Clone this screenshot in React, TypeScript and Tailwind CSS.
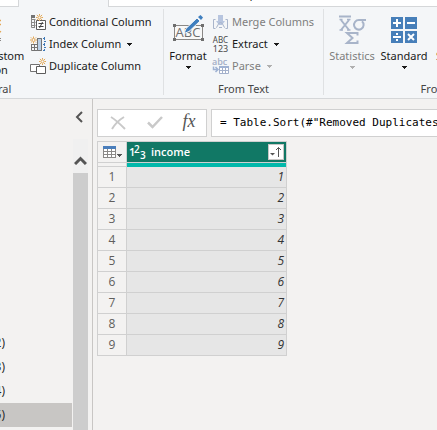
import React from "react";

const SUN = "#e3a857";

function Sun({ x, y }: { x: number; y: number }) {
  return (
    <g transform={`translate(${x} ${y})`} stroke={SUN} strokeWidth="1" fill="none">
      <circle r="1.5" />
      <path d="M0-3.5V-2M0 3.5V2M-3.5 0H-2M3.5 0H2M-2.6-2.6l1.1 1.1M2.6-2.6l-1.1 1.1M-2.6 2.6l1.1-1.1M2.6 2.6l-1.1-1.1" />
    </g>
  );
}

function ConditionalIcon() {
  return (
    <svg width="16" height="16" viewBox="0 0 16 16" className="shrink-0">
      <path d="M1.5 2v11.5H5M1.5 5.5h4M1.5 8.5h4M1.5 11.5h4M4.5 5v9" stroke="#8a8886" fill="none" />
      <path d="M1 1h4v3H1z" fill="#737373" />
      <path d="M6.5 6.5h9v9h-9z" stroke="#5c5c5c" fill="#fff" />
      <path d="M8.5 9.5h5M8.5 12.5h5M12.5 8l-3 6" stroke="#444" fill="none" />
      <Sun x={9.5} y={3.5} />
    </svg>
  );
}

function IndexIcon() {
  return (
    <svg width="16" height="16" viewBox="0 0 16 16" className="shrink-0">
      <path d="M1.5 8v6.5h10v-12H7M4.5 8v6M1.5 8.5h6M1.5 11.5h6" stroke="#737373" fill="none" />
      <path d="M7.5 2.5h4v12h-4z" fill="#b9d0e8" stroke="#737373" />
      <path d="M13 2.5h2M14 5.5h2M13 8.5h2M14 11.5h2M13 14.5h2" stroke="#3f7ab8" />
      <path d="M14.5 1v14" stroke="#3f7ab8" strokeDasharray="1 1" />
      <Sun x={3.5} y={4} />
    </svg>
  );
}

function DuplicateIcon() {
  return (
    <svg width="16" height="16" viewBox="0 0 16 16" className="shrink-0 overflow-visible">
      <path d="M.5 6.5h9v7h-9z" stroke="#737373" fill="#fff" />
      <path d="M6.5 8.5h9v7h-9z" stroke="#5c5c5c" fill="#fff" />
      <Sun x={12.5} y={3.5} />
    </svg>
  );
}

function MergeIcon() {
  return (
    <svg width="17" height="16" viewBox="0 0 17 16" className="shrink-0">
      <path d="M3.5 5.5h-2v9h2M13.5 5.5h2v9h-2" stroke="#a9b5cb" fill="none" />
      <path d="M6 1h5v6h2l-3 4h-3L4 7h2z" fill="#b7c5df" />
      <path d="M4 13.5c2 0 1.5-5 4.5-5s2.5 5 4.5 5M7 13.5h3" stroke="#a9b5cb" fill="none" />
    </svg>
  );
}

function ExtractIcon() {
  return (
    <span className="flex w-[17px] flex-col items-center text-[8px] leading-[9px] text-[#4a4a4a]">
      <span>ABC</span>
      <span className="text-[9px]">123</span>
    </span>
  );
}

function ParseIcon() {
  return (
    <svg width="17" height="17" viewBox="0 0 17 17" className="shrink-0">
      <text x="0" y="7" fontSize="9" fontWeight="600" fill="#a3aec6" fontFamily="'Open Sans', sans-serif">abc</text>
      <path d="M1.5 8.5v3H5M3.5 9l2.500 2.500L3.500 14" stroke="#9fb2d3" fill="none" strokeWidth="1.5" />
      <path d="M7.5 9.5h9v6h-9zM7.5 12.5h9M10.5 10v6M13.5 10v6" stroke="#a3b0cb" fill="#fff" />
      <path d="M7 8h10v2H7z" fill="#9fb2d3" />
    </svg>
  );
}

function FormatIcon() {
  return (
    <svg width="32" height="32" viewBox="0 0 32 32">
      <path d="M2.5 12.5h28v14h-28z" stroke="#8a8886" fill="#f8f8f8" />
      <text x="16" y="24" fontSize="13" textAnchor="middle" fill="#6e6e6e" fontFamily="'Open Sans', sans-serif">ABC</text>
      <path d="M1 11h3v3H1zM29 11h3v3h-3zM1 25h3v3H1zM29 25h3v3h-3z" fill="#6e6e6e" />
      <path d="M14 15.5L25 5l3 3L17 18.5l-5 2z" fill="#3f7fbf" stroke="#f4f6f8" />
      <path d="M26 4l2.5-2L31 4.5 29 7z" fill="#3f7fbf" />
    </svg>
  );
}

function StatisticsIcon() {
  return (
    <svg width="32" height="32" viewBox="0 0 32 32" stroke="#a8b4c9" fill="none" strokeWidth="2">
      <path d="M3 3.5h12" />
      <path d="M5 7l8 10M13 7L5 17" />
      <path d="M3.5 6.5h3M11 6.5h3.5M3.5 17h3.5M11 17h3.5" strokeWidth="1.5" />
      <path d="M30 7h-7a4.8 4.8 0 1 0 3 1.2" />
      <path d="M21.5 22.5V20H11l5.5 5-5.5 5h10.5v-2.5" />
    </svg>
  );
}

function StandardIcon() {
  return (
    <svg width="32" height="32" viewBox="0 0 32 32">
      <path d="M3 4h12v12H3zM17 4h12v12H17zM3 18h12v12H3zM17 18h12v12H17z" fill="#477fb9" />
      <path d="M5 10h8M9 6v8M19 10h8M5 24h8M20 21l6 6M26 21l-6 6" stroke="#fff" strokeWidth="2" />
      <path d="M8 20h2v2H8zM8 26h2v2H8z" fill="#fff" />
    </svg>
  );
}

function InvokeIcon() {
  return (
    <svg width="32" height="32" viewBox="0 0 32 32">
      <path d="M2.5 6.5h22v20h-22zM2 27.5h29M27 25.5h4" stroke="#8a8886" fill="none" />
      <path d="M28 7.5h3M28 11.5h3M27 17l4 2" stroke={SUN} strokeWidth="1.5" />
    </svg>
  );
}

function Caret({ className = "" }: { className?: string }) {
  return (
    <svg width="5" height="3" viewBox="0 0 5 3" className={className} fill="currentColor" shapeRendering="crispEdges">
      <path d="M0 0h5L2.5 3z" />
    </svg>
  );
}

function SmallButton({ icon, label, caret, muted }: { icon: React.ReactNode; label: string; caret?: boolean; muted?: boolean }) {
  return (
    <button
      disabled={muted}
      className={`flex h-[22px] items-center gap-[3px] whitespace-nowrap ${muted ? "text-[#7e7e7e]" : "text-[#1a1a1a]"}`}
    >
      {icon}
      <span>{label}</span>
      {caret && <Caret className={muted ? "ml-[3px] text-[#b0b0b0]" : "ml-[3px]"} />}
    </button>
  );
}

function LargeButton({ icon, lines, caret, muted, className }: { icon: React.ReactNode; lines: string[]; caret?: boolean; muted?: boolean; className: string }) {
  return (
    <button disabled={muted} className={`flex shrink-0 flex-col items-center leading-[14px] ${muted ? "text-[#7e7e7e]" : "text-[#1a1a1a]"} ${className}`}>
      {icon}
      <span className="mt-1 flex flex-col whitespace-nowrap">
        {lines.map((l) => (
          <span key={l}>{l}</span>
        ))}
      </span>
      {caret && <Caret className={muted ? "mt-[3px] text-[#b0b0b0]" : "mt-[3px]"} />}
    </button>
  );
}

function Group({ label, className, children }: { label: string; className: string; children: React.ReactNode }) {
  return (
    <section className={`flex shrink-0 flex-col justify-between ${className}`}>
      <div className="flex">{children}</div>
      <div className="text-center leading-4 text-[#444]">{label}</div>
    </section>
  );
}

const Divider = () => <div className="my-[2px] w-px shrink-0 bg-[#dfe1e3]" />;

const rows = [1, 2, 3, 4, 5, 6, 7, 8, 9];
const queries = ["(2)", "(3)", "(4)", "(5)"];

export default function App() {
  return (
    <div className="flex h-screen flex-col overflow-hidden bg-[#f3f2f1] font-['Open_Sans','Noto_Sans',sans-serif] text-[12px] text-[#222]">
      <nav className="flex h-[7px] shrink-0 overflow-hidden bg-white">
        <div className="w-[18px] border-b border-[#d5d7d9]" />
        <div className="w-[91px] border-x border-[#d5d7d9] bg-[#f4f6f8]" />
        <div className="flex flex-1 items-end border-b border-[#d5d7d9] pb-1 pl-[122px]">
          <button className="leading-4">Help</button>
        </div>
      </nav>

      <div className="flex h-[92px] shrink-0 overflow-hidden border-b border-[#d5d7d9] bg-[#f4f6f8] pb-px font-['Noto_Sans','Open_Sans',sans-serif] text-[11px]">
        <Group label="General" className="-ml-[181px] w-[344px]">
          <div className="flex flex-1 justify-end gap-[5px] pr-[10px]">
            <LargeButton icon={<InvokeIcon />} lines={["Invoke Custom", "Function"]} className="w-[79px] pt-[6px]" />
            <div className="w-[123px] pt-1">
              <SmallButton icon={<ConditionalIcon />} label="Conditional Column" />
              <SmallButton icon={<IndexIcon />} label="Index Column" caret />
              <SmallButton icon={<DuplicateIcon />} label="Duplicate Column" />
            </div>
          </div>
        </Group>
        <Divider />
        <Group label="From Text" className="w-[159px]">
          <LargeButton icon={<FormatIcon />} lines={["Format"]} caret className="w-[48px] pt-[6px]" />
          <div className="pt-1">
            <SmallButton icon={<MergeIcon />} label="Merge Columns" muted />
            <SmallButton icon={<ExtractIcon />} label="Extract" caret />
            <SmallButton icon={<ParseIcon />} label="Parse" caret muted />
          </div>
        </Group>
        <Divider />
        <Group label="From Number" className="w-[264px] pl-[2px]">
          <LargeButton icon={<StatisticsIcon />} lines={["Statistics"]} caret muted className="w-[52px] pt-[6px]" />
          <LargeButton icon={<StandardIcon />} lines={["Standard"]} caret className="w-[52px] pt-[6px]" />
          <LargeButton icon={<StandardIcon />} lines={["Scientific"]} caret className="w-[58px] pt-[6px]" />
        </Group>
      </div>

      <div className="flex min-h-0 flex-1">
        <aside className="flex w-[93px] shrink-0 flex-col border-r border-[#c8c6c4]">
          <div className="flex h-10 shrink-0 items-center justify-end pr-2">
            <button aria-label="Collapse queries" className="pb-1">
              <svg width="9" height="12" viewBox="0 0 9 12" fill="none" stroke="#555" strokeWidth="2">
                <path d="M7 1L2 6l5 5" />
              </svg>
            </button>
          </div>
          <div className="flex min-h-0 flex-1 gap-px">
            <ul className="flex flex-1 flex-col justify-end pb-[3px]">
              {queries.map((q) => (
                <li key={q} className={q === "(5)" ? "bg-[#c8c6c4]" : ""}>
                  <button className="flex h-6 w-[5px] items-center justify-end">{q}</button>
                </li>
              ))}
            </ul>
            <div className="flex w-[19px] flex-col pr-1">
              <button aria-label="Scroll up" className="flex h-[34px] shrink-0 items-center justify-center bg-[#f0f0f0] pt-2">
                <svg width="13" height="9" viewBox="0 0 13 9" fill="none" stroke="#555" strokeWidth="3">
                  <path d="M1 8l5.5-5.5L12 8" />
                </svg>
              </button>
              <div className="flex-1 bg-[#cdcdcd]" />
            </div>
          </div>
        </aside>

        <main className="flex min-w-0 flex-1 flex-col gap-1 pt-[10px] pl-1">
          <div className="flex h-7 shrink-0 gap-1">
            <div className="flex w-[110px] shrink-0 items-center border border-[#d0d0d0] bg-white">
              <button aria-label="Cancel" className="flex w-10 justify-center">
                <svg width="16" height="16" viewBox="0 0 16 16" fill="none" stroke="#c9c9c9" strokeWidth="2">
                  <path d="M1 2c5 3 9 7 14 12M14 2C9 5 5 9 2 14" />
                </svg>
              </button>
              <button aria-label="Commit" className="flex w-[34px] justify-center">
                <svg width="16" height="14" viewBox="0 0 16 14" fill="none" stroke="#c9c9c9" strokeWidth="2.5">
                  <path d="M1 6.5L5.5 11 15 1" />
                </svg>
              </button>
              <button aria-label="Insert step" className="flex-1 pb-1 font-['Liberation_Serif',serif] text-[18px] leading-5 text-[#555] italic">
                fx
              </button>
            </div>
            <input
              aria-label="Formula"
              defaultValue={'= Table.Sort(#"Removed Duplicates",{{"income", Order.Ascending}})'}
              className="min-w-0 flex-1 border border-r-0 border-[#d0d0d0] bg-white pl-2 font-['DejaVu_Sans_Mono',monospace] text-[11px] text-black outline-none"
            />
          </div>

          <table className="w-[190px] table-fixed border-separate border-spacing-0 border-t border-l border-[#d0d0d0]">
            <colgroup>
              <col className="w-[29px]" />
              <col />
            </colgroup>
            <thead>
              <tr className="h-[21px]">
                <th className="border-r border-b border-[#d0d0d0] p-0">
                  <button aria-label="Table options" className="flex h-5 items-center pl-1">
                    <svg width="21" height="13" viewBox="0 0 21 13" className="ml-px" shapeRendering="crispEdges">
                      <path d="M.5.5h12v11H.5zM1 5.5h12M1 8.5h12M4.5 3v9M8.5 3v9" fill="#fff" stroke="#8a8886" />
                      <path d="M0 0h13v3H0z" fill="#4a7ebb" />
                      <path d="M14 8h5l-2.5 3z" fill="#555" />
                    </svg>
                  </button>
                </th>
                <th className="border-r border-b border-[#d0d0d0] bg-[#117865] p-0 text-white">
                  <div className="flex h-5 items-center pr-[2px] pl-[2px]">
                    <svg width="17" height="16" viewBox="0 0 17 16" fill="#fff" fontFamily="'Open Sans', sans-serif" fontWeight="600" aria-label="Whole number">
                      <text x="0" y="12" fontSize="11">1</text>
                      <text x="5" y="9" fontSize="10">2</text>
                      <text x="11" y="15" fontSize="10">3</text>
                    </svg>
                    <span className="flex-1 pl-[5px] text-left text-[11px] leading-4 font-semibold">income</span>
                    <button aria-label="Sort and filter" className="flex size-4 items-center justify-center border border-[#c8c6c4] bg-white">
                      <svg width="12" height="12" viewBox="0 0 12 12">
                        <path d="M0 7h5L2.5 9.5z" fill="#555" />
                        <path d="M8.5 11V1.5M6 4l2.5-2.5L11 4" stroke="#555" fill="none" />
                      </svg>
                    </button>
                  </div>
                </th>
              </tr>
              <tr className="h-1">
                <td className="border-r border-b border-[#d0d0d0] p-0" />
                <td className="border-r border-[#d0d0d0] bg-[#01b8aa] p-0" />
              </tr>
            </thead>
            <tbody>
              {rows.map((n) => (
                <tr key={n} className="h-[21px]">
                  <th scope="row" className="border-r border-b border-[#d0d0d0] p-0 text-center leading-5 font-normal text-[#605e5c]">
                    {n}
                  </th>
                  <td className="border-r border-b border-[#d0d0d0] bg-[#e6e6e6] p-0 pr-[2px] text-right leading-5 text-[#333] italic">{n}</td>
                </tr>
              ))}
            </tbody>
          </table>
        </main>
      </div>
    </div>
  );
}
